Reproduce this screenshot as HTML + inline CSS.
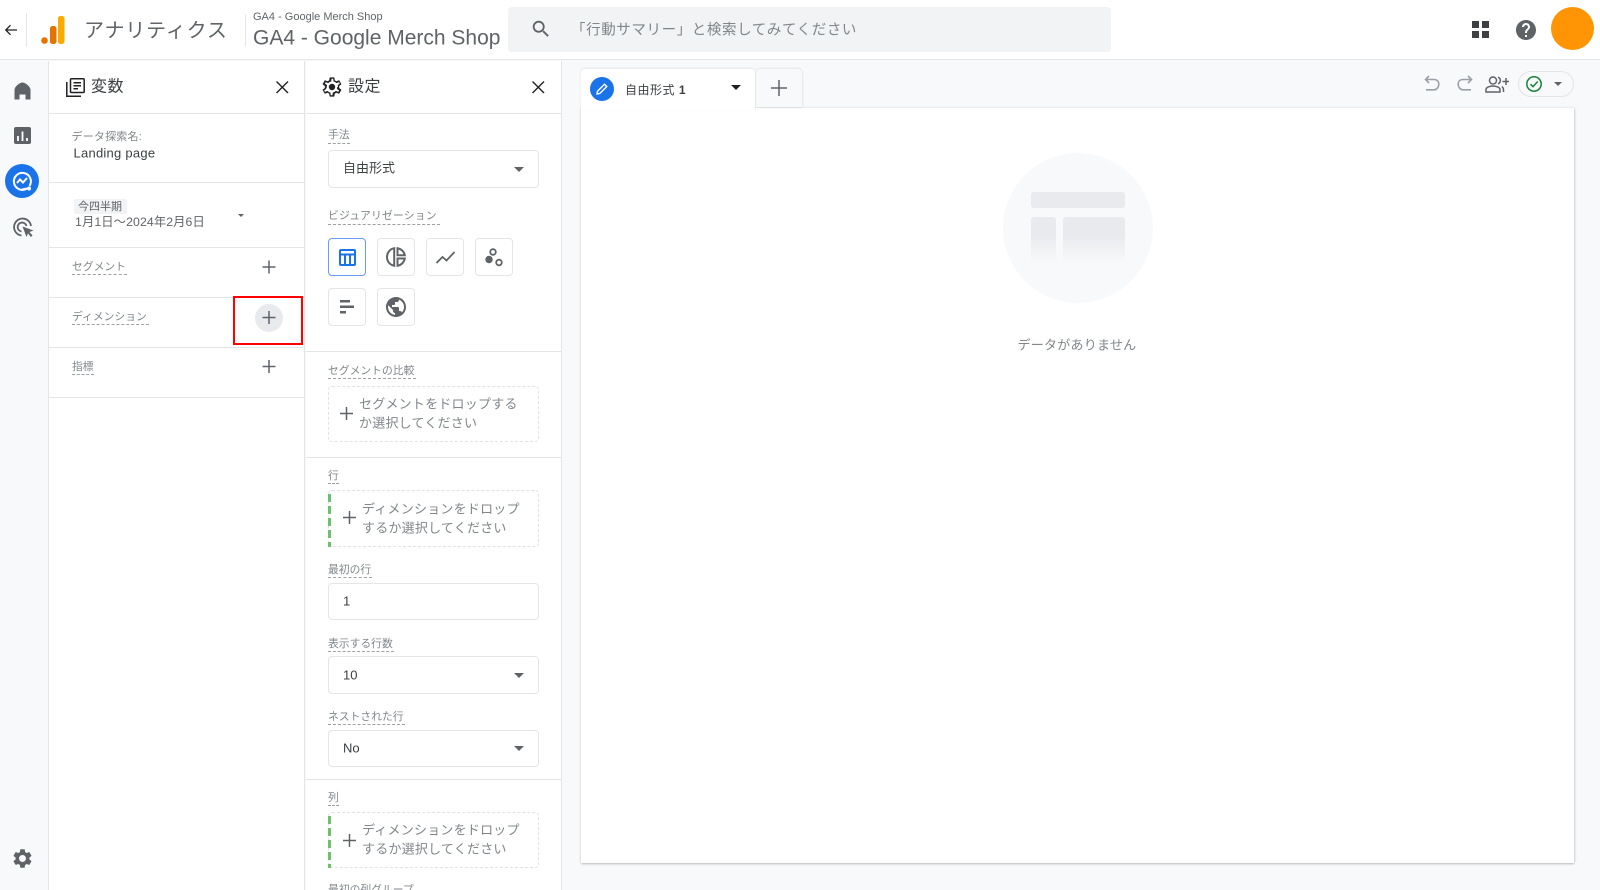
<!DOCTYPE html>
<html lang="ja"><head><meta charset="utf-8"><title>アナリティクス</title>
<style>
html,body{margin:0;padding:0;width:1600px;height:890px;overflow:hidden;background:#f8f9fa}
body{position:relative;font-family:"Liberation Sans","Noto Sans CJK JP",sans-serif;color:#3c4043;filter:blur(.35px)}
.a{position:absolute;box-sizing:border-box}
.t{position:absolute;white-space:nowrap;transform:translateY(-50%);line-height:1.3}
.l{font-size:10.800px;color:#80868b;margin-top:1px}
.u{position:absolute;height:0;border-top:1px dashed #9aa0a6}
.h{position:absolute;height:1px;background:#e3e5e8}
.v{position:absolute;width:1px;background:#e3e5e8}
.box{position:absolute;box-sizing:border-box;background:#fff;border:1px solid #e3e5e8;border-radius:4px}
.drop{position:absolute;box-sizing:border-box;border:1px dashed #e0e2e5;border-radius:4px;background:#fff}
.g{position:absolute;left:328px;width:3px;background:repeating-linear-gradient(to bottom,#6cc070 0 8px,transparent 8px 12px)}
.d{font-size:13px;color:#80868b;letter-spacing:.22px}
.arr{position:absolute;width:0;height:0;border-left:5px solid transparent;border-right:5px solid transparent;border-top:5px solid #5f6368}
svg{position:absolute;display:block;overflow:visible}
</style></head><body>

<!-- top bar -->
<div class="a" style="left:0;top:0;width:1600px;height:60px;background:#fff;border-bottom:1px solid #e3e5e8"></div>
<svg style="left:4px;top:23px" width="14" height="14" viewBox="0 0 14 14" fill="none" stroke="#202124" stroke-width="1.300"><path d="M13 7H2M6.500 2.200 1.800 7l4.700 4.800"/></svg>
<div class="v" style="left:26px;top:13px;height:34px"></div>
<svg style="left:41px;top:16px" width="24" height="28" viewBox="0 0 24 28">
<rect x="17" y="0" width="6.500" height="28" rx="2.500" fill="#f9ab00"/>
<rect x="9" y="10" width="6.500" height="18" rx="2.500" fill="#e37400"/>
<circle cx="3.500" cy="24.500" r="3.300" fill="#e37400"/></svg>
<div class="t" style="left:84px;top:31px;font-size:20px;color:#5f6368;letter-spacing:.85px">アナリティクス</div>
<div class="v" style="left:245px;top:15px;height:31px"></div>
<div class="t" style="left:253px;top:17px;font-size:11px;color:#5f6368">GA4 - Google Merch Shop</div>
<div class="t" style="left:253px;top:38px;font-size:21px;color:#5f6368">GA4 - Google Merch Shop</div>
<div class="a" style="left:508px;top:7px;width:603px;height:45px;background:#f1f3f4;border-radius:4px"></div>
<svg style="left:530px;top:18px" width="22" height="22" viewBox="0 0 24 24" fill="#5f6368"><path d="M15.500 14h-.79l-.28-.27C15.410 12.590 16 11.110 16 9.500 16 5.910 13.090 3 9.500 3S3 5.910 3 9.500 5.910 16 9.500 16c1.610 0 3.090-.59 4.230-1.570l.27.28v.79l5 4.990L20.490 19l-4.990-5zm-6 0C7.010 14 5 11.990 5 9.500S7.010 5 9.500 5 14 7.010 14 9.500 11.990 14 9.500 14z"/></svg>
<div class="t" style="left:571px;top:31px;font-size:14.500px;color:#80868b;letter-spacing:.6px">「行動サマリー」と検索してみてください</div>
<svg style="left:1472px;top:21px" width="18" height="18" fill="#3c4043"><rect width="7" height="7"/><rect x="10" width="7" height="7"/><rect y="10" width="7" height="7"/><rect x="10" y="10" width="7" height="7"/></svg>
<svg style="left:1514px;top:18px" width="24" height="24" viewBox="0 0 24 24" fill="#5f6368"><path d="M12 2C6.480 2 2 6.480 2 12s4.480 10 10 10 10-4.480 10-10S17.520 2 12 2zm1 17h-2v-2h2v2zm2.070-7.750l-.9.920C13.450 12.900 13 13.500 13 15h-2v-.5c0-1.100.45-2.100 1.170-2.830l1.240-1.260c.37-.36.59-.86.59-1.410 0-1.100-.9-2-2-2s-2 .9-2 2H8c0-2.210 1.790-4 4-4s4 1.790 4 4c0 .88-.36 1.680-.93 2.250z"/></svg>
<div class="a" style="left:1551px;top:7px;width:43px;height:43px;border-radius:50%;background:#ff9505"></div>

<!-- left rail -->
<div class="a" style="left:0;top:61px;width:49px;height:829px;background:#f8f9fa;border-right:1px solid #e3e5e8"></div>
<svg style="left:14px;top:82px" width="17" height="18" viewBox="0 0 17 18" fill="#5f6368"><path d="M8.500 0.500 C6 0.500 1 4 0.500 7.500V17.500H5.500V12.500H11.500V17.500H16.500V7.500C16 4 11 0.500 8.500 0.500z"/></svg>
<svg style="left:14px;top:127px" width="17" height="17" viewBox="0 0 17 17"><rect width="17" height="17" rx="2" fill="#5f6368"/><path d="M4 9v5M8.500 4.500V14M13 11v3" stroke="#fff" stroke-width="1.800"/></svg>
<div class="a" style="left:5px;top:164px;width:34px;height:34px;border-radius:50%;background:#1a73e8"></div>
<svg style="left:12px;top:171px" width="20" height="20" viewBox="0 0 20 20" fill="none" stroke="#fff" stroke-width="2"><path d="M17.500 15A8.500 8.500 0 1 0 15 17.500L10 18.500"/><path d="M5 12 8 8.500 11 11.500 15 7"/><circle cx="17" cy="17.500" r="1"/></svg>
<svg style="left:13px;top:217px" width="22" height="21" viewBox="0 0 22 21" fill="none" stroke="#5f6368" stroke-width="1.800"><path d="M8.500 18.500A8.500 8.500 0 1 1 18 9"/><path d="M8.500 14.500A4.500 4.500 0 1 1 13.500 9"/><path d="M9.500 9.500 20.500 13.500 16.500 15 19.500 18.500 18 20 15 16.500 13.500 20z" fill="#5f6368" stroke="none"/></svg>
<svg style="left:11px;top:847px" width="23" height="23" viewBox="0 0 24 24" fill="#5f6368"><path d="M19.140 12.940c.04-.3.060-.61.060-.94 0-.32-.02-.64-.07-.94l2.030-1.580c.18-.14.23-.41.12-.61l-1.920-3.320c-.12-.22-.37-.29-.59-.22l-2.390.96c-.5-.38-1.030-.7-1.620-.94l-.36-2.540c-.04-.24-.24-.41-.48-.41h-3.840c-.24 0-.43.17-.47.41l-.36 2.540c-.59.24-1.130.57-1.620.94l-2.390-.96c-.22-.08-.47 0-.59.22L2.740 8.870c-.12.21-.08.47.12.61l2.030 1.580c-.05.3-.09.63-.09.94s.02.64.07.94l-2.030 1.580c-.18.14-.23.41-.12.61l1.920 3.320c.12.22.37.29.59.22l2.390-.96c.5.38 1.030.7 1.620.94l.36 2.540c.05.24.24.41.48.41h3.840c.24 0 .44-.17.47-.41l.36-2.540c.59-.24 1.130-.56 1.620-.94l2.390.96c.22.08.47 0 .59-.22l1.920-3.320c.12-.22.07-.47-.12-.61l-2.010-1.580zM12 15.600c-1.980 0-3.600-1.620-3.600-3.600s1.620-3.600 3.600-3.600 3.600 1.620 3.600 3.600-1.620 3.600-3.600 3.600z"/></svg>

<!-- variables panel -->
<div class="a" style="left:49px;top:61px;width:256px;height:829px;background:#fff;border-right:1px solid #e3e5e8"></div>
<svg style="left:66px;top:78px" width="19" height="19" viewBox="0 0 19 19" fill="none" stroke="#202124" stroke-width="1.500"><rect x="4.500" y="0.800" width="13.700" height="13.700" rx="1"/><path d="M0.800 4V18.200H15M7.500 4.800H15M7.500 7.800H15M7.500 10.800H12"/></svg>
<div class="t" style="left:91px;top:88px;font-size:16px;color:#3c4043;letter-spacing:.5px">変数</div>
<svg style="left:276px;top:81px" width="12" height="12" fill="none" stroke="#202124" stroke-width="1.400"><path d="M.5.500 12 12M12 .5.500 12"/></svg>
<div class="h" style="left:49px;top:113px;width:256px"></div>
<div class="t" style="left:71.500px;top:137px;font-size:11px;color:#80868b;letter-spacing:.2px">データ探索名:</div>
<div class="t" style="left:73.500px;top:153.500px;font-size:13px;color:#3c4043;letter-spacing:.25px">Landing page</div>
<div class="h" style="left:49px;top:182px;width:256px"></div>
<div class="a" style="left:74px;top:199px;width:53px;height:15px;background:#f1f3f4;border-radius:2px"></div>
<div class="t" style="left:78px;top:206.500px;font-size:11px;color:#5f6368">今四半期</div>
<div class="t" style="left:75px;top:222.500px;font-size:12.300px;color:#5f6368;letter-spacing:.1px">1月1日～2024年2月6日</div>
<div class="arr" style="left:237.500px;top:213.500px;border-left-width:3.500px;border-right-width:3.500px;border-top-width:3.500px"></div>
<div class="h" style="left:49px;top:247px;width:256px"></div>
<div class="h" style="left:49px;top:297px;width:256px"></div>
<div class="h" style="left:49px;top:347px;width:256px"></div>
<div class="h" style="left:49px;top:397px;width:256px"></div>
<div class="t l" style="left:72px;top:266px">セグメント</div><div class="u" style="left:72px;top:274px;width:55px"></div>
<div class="t l" style="left:72px;top:316px">ディメンション</div><div class="u" style="left:72px;top:324px;width:77px"></div>
<div class="t l" style="left:72px;top:366px">指標</div><div class="u" style="left:72px;top:374px;width:22px"></div>
<div class="a" style="left:255px;top:304px;width:28px;height:28px;border-radius:50%;background:#e8eaed"></div>
<svg style="left:262px;top:260px" width="14" height="114" fill="none" stroke="#5f6368" stroke-width="1.500"><path d="M7 .5V13.500M.5 7H13.500M7 51V64M.5 57.500H13.500M7 100V113M.5 106.500H13.500"/></svg>
<div class="a" style="left:233px;top:296px;width:70px;height:49px;border:2px solid #f00"></div>

<!-- settings panel -->
<div class="a" style="left:306px;top:61px;width:256px;height:829px;background:#fff;border-right:1px solid #e3e5e8"></div>
<svg style="left:320px;top:75px" width="24" height="24" viewBox="0 0 24 24" fill="#202124"><path fill-rule="evenodd" d="M19.140 12.940c.04-.3.060-.61.060-.94 0-.32-.02-.64-.07-.94l2.030-1.580c.18-.14.23-.41.12-.61l-1.920-3.320c-.12-.22-.37-.29-.59-.22l-2.390.96c-.5-.38-1.030-.7-1.620-.94l-.36-2.540c-.04-.24-.24-.41-.48-.41h-3.840c-.24 0-.43.17-.47.41l-.36 2.540c-.59.24-1.130.57-1.620.94l-2.390-.96c-.22-.08-.47 0-.59.22L2.740 8.870c-.12.21-.08.47.12.61l2.030 1.580c-.05.3-.09.63-.09.94s.02.64.07.94l-2.030 1.580c-.18.14-.23.41-.12.61l1.920 3.320c.12.22.37.29.59.22l2.390-.96c.5.38 1.030.7 1.620.94l.36 2.540c.05.24.24.41.48.41h3.840c.24 0 .44-.17.47-.41l.36-2.540c.59-.24 1.130-.56 1.620-.94l2.390.96c.22.08.47 0 .59-.22l1.920-3.320c.12-.22.07-.47-.12-.61l-2.010-1.580zM17.200 12c0 .3-.03.6-.08.94l-.14.9 2.100 1.650-.8 1.400-2.500-1-.73.56c-.5.37-.95.63-1.420.83l-.84.34-.38 2.660h-1.600l-.38-2.660-.84-.34c-.5-.2-.95-.46-1.400-.8l-.74-.58-2.500 1-.8-1.400 2.120-1.650-.14-.9C6.830 12.600 6.800 12.300 6.800 12s.03-.6.08-.94l.14-.9-2.120-1.650.8-1.400 2.500 1 .73-.56c.5-.37.95-.63 1.420-.83l.84-.34.38-2.660h1.600l.38 2.660.84.34c.5.2.95.46 1.400.8l.74.58 2.500-1 .8 1.400-2.100 1.650.14.9c.05.34.08.64.08.95z"/><circle cx="12" cy="12" r="3.200"/></svg>
<div class="t" style="left:348px;top:87.500px;font-size:16px;color:#3c4043;letter-spacing:.5px">設定</div>
<svg style="left:532px;top:81px" width="12" height="12" fill="none" stroke="#202124" stroke-width="1.400"><path d="M.5.500 12 12M12 .5.500 12"/></svg>
<div class="h" style="left:306px;top:113px;width:256px"></div>

<div class="t l" style="left:328px;top:134px">手法</div><div class="u" style="left:328px;top:143px;width:22px"></div>
<div class="box" style="left:328px;top:150px;width:211px;height:38px"></div>
<div class="t" style="left:343px;top:169px;font-size:13px;color:#3c4043">自由形式</div>
<div class="arr" style="left:514px;top:167px"></div>

<div class="t l" style="left:328px;top:215px;letter-spacing:.2px">ビジュアリゼーション</div><div class="u" style="left:328px;top:224px;width:112px"></div>

<div class="box" style="left:328px;top:238px;width:38px;height:38px;border-color:#669df6"></div>
<svg style="left:339px;top:249px" width="17" height="17" fill="none" stroke="#1a73e8" stroke-width="2"><rect x="1" y="1" width="15" height="15" rx="1"/><path d="M1 5.500H16M6 5.500V16M11 5.500V16"/></svg>
<div class="box" style="left:377px;top:238px;width:38px;height:38px"></div>
<svg style="left:386px;top:247px" width="20" height="20" viewBox="0 0 20 20" fill="none" stroke="#5f6368" stroke-width="2"><path d="M8.200 1.200C4 2 1 5.500 1 10s3 8 7.200 8.800z"/><path d="M11.500 1.200V8.200H18.800C18.200 4.700 15 1.700 11.500 1.200z"/><path d="M11.500 11.500V18.800C15 18.300 18.200 15.300 18.800 11.500z"/></svg>
<div class="box" style="left:426px;top:238px;width:38px;height:38px"></div>
<svg style="left:436px;top:251px" width="19" height="13" fill="none" stroke="#5f6368" stroke-width="1.800"><path d="M.5 12 6.500 6l4 3.500L18.500 1"/></svg>
<div class="box" style="left:475px;top:238px;width:38px;height:38px"></div>
<svg style="left:485px;top:248px" width="19" height="19"><circle cx="8" cy="4" r="2.800" fill="none" stroke="#5f6368" stroke-width="1.800"/><circle cx="4" cy="11.500" r="3.700" fill="#5f6368"/><circle cx="14" cy="14.500" r="2.800" fill="none" stroke="#5f6368" stroke-width="1.800"/></svg>
<div class="box" style="left:328px;top:288px;width:38px;height:38px"></div>
<svg style="left:340px;top:300px" width="15" height="14" fill="#5f6368"><rect width="10" height="2.500"/><rect y="5.500" width="14" height="2.500"/><rect y="11" width="6" height="2.500"/></svg>
<div class="box" style="left:377px;top:288px;width:38px;height:38px"></div>
<svg style="left:384px;top:295px" width="24" height="24" viewBox="0 0 24 24" fill="#5f6368"><path d="M12 2C6.480 2 2 6.480 2 12s4.480 10 10 10 10-4.480 10-10S17.520 2 12 2zm-1 17.930c-3.950-.49-7-3.850-7-7.930 0-.62.080-1.210.21-1.790L9 15v1c0 1.100.9 2 2 2v1.930zm6.900-2.540c-.26-.81-1-1.390-1.900-1.390h-1v-3c0-.55-.45-1-1-1H8v-2h2c.55 0 1-.45 1-1V7h2c1.100 0 2-.9 2-2v-.41c2.930 1.190 5 4.060 5 7.410 0 2.080-.8 3.970-2.100 5.390z"/></svg>

<div class="h" style="left:306px;top:351px;width:256px"></div>
<div class="t l" style="left:328px;top:370px">セグメントの比較</div><div class="u" style="left:328px;top:378px;width:88px"></div>
<div class="drop" style="left:328px;top:386px;width:211px;height:56px"></div>
<svg style="left:339.500px;top:406.500px" width="13" height="13" fill="none" stroke="#5f6368" stroke-width="1.500"><path d="M6.500 0V13M0 6.500H13"/></svg>
<div class="t d" style="left:359px;top:405px">セグメントをドロップする</div>
<div class="t d" style="left:359px;top:424px">か選択してください</div>
<div class="h" style="left:306px;top:457px;width:256px"></div>

<div class="t l" style="left:328px;top:475px">行</div><div class="u" style="left:328px;top:483px;width:11px"></div>
<div class="drop" style="left:328px;top:490px;width:211px;height:57px"></div>
<div class="g" style="top:494px;height:53px"></div>
<svg style="left:342.500px;top:511px" width="13" height="13" fill="none" stroke="#5f6368" stroke-width="1.500"><path d="M6.500 0V13M0 6.500H13"/></svg>
<div class="t d" style="left:362px;top:509.500px">ディメンションをドロップ</div>
<div class="t d" style="left:362px;top:528.500px">するか選択してください</div>

<div class="t l" style="left:328px;top:569px">最初の行</div><div class="u" style="left:328px;top:577px;width:44px"></div>
<div class="box" style="left:328px;top:583px;width:211px;height:37px"></div>
<div class="t" style="left:343px;top:602px;font-size:13px;color:#3c4043">1</div>

<div class="t l" style="left:328px;top:643px">表示する行数</div><div class="u" style="left:328px;top:651px;width:66px"></div>
<div class="box" style="left:328px;top:656px;width:211px;height:38px"></div>
<div class="t" style="left:343px;top:675.500px;font-size:13px;color:#3c4043">10</div>
<div class="arr" style="left:514px;top:673px"></div>

<div class="t l" style="left:328px;top:716px">ネストされた行</div><div class="u" style="left:328px;top:724px;width:77px"></div>
<div class="box" style="left:328px;top:730px;width:211px;height:37px"></div>
<div class="t" style="left:343px;top:749px;font-size:13px;color:#3c4043">No</div>
<div class="arr" style="left:514px;top:746px"></div>
<div class="h" style="left:306px;top:779px;width:256px"></div>

<div class="t l" style="left:328px;top:797px">列</div><div class="u" style="left:328px;top:805px;width:11px"></div>
<div class="drop" style="left:328px;top:812px;width:211px;height:56px"></div>
<div class="g" style="top:816px;height:52px"></div>
<svg style="left:342.500px;top:833.500px" width="13" height="13" fill="none" stroke="#5f6368" stroke-width="1.500"><path d="M6.500 0V13M0 6.500H13"/></svg>
<div class="t d" style="left:362px;top:831px">ディメンションをドロップ</div>
<div class="t d" style="left:362px;top:850px">するか選択してください</div>
<div class="t l" style="left:328px;top:889px">最初の列グループ</div>

<!-- main -->
<div class="a" style="left:581px;top:108px;width:993px;height:755px;background:#fff;box-shadow:0 1px 2px rgba(60,64,67,.3),1px 0 2px rgba(60,64,67,.1)"></div>
<div class="a" style="left:756px;top:69px;width:46px;height:38px;background:#f8f9fa;border-radius:4px 4px 0 0;box-shadow:0 0 2px rgba(60,64,67,.22)"></div>
<svg style="left:771px;top:80px" width="16" height="16" fill="none" stroke="#5f6368" stroke-width="1.500"><path d="M8 0V16M0 8H16"/></svg>
<div class="a" style="left:581px;top:69px;width:174px;height:42px;background:#fff;border-radius:4px 4px 0 0;box-shadow:0 -1px 2px rgba(60,64,67,.1)"></div>
<div class="a" style="left:590px;top:77px;width:24px;height:24px;border-radius:50%;background:#1a73e8"></div>
<svg style="left:596px;top:83px" width="12" height="12" fill="none" stroke="#fff" stroke-width="1.400"><path d="M1 11 1.500 8.200 8.500 1.200 10.800 3.500 3.800 10.500z"/></svg>
<div class="t" style="left:625px;top:90.500px;font-size:12px;color:#3c4043;letter-spacing:.5px">自由形式 <b>1</b></div>
<div class="arr" style="left:731px;top:85px;border-top-color:#202124"></div>

<svg style="left:1424px;top:75px" width="16" height="17" fill="none" stroke="#9aa0a6" stroke-width="1.600"><path d="M5 1 1.500 4.500 5 8M1.500 4.500H10C13 4.500 14.800 6.500 14.800 9.200S13 14.800 10 14.800H2"/></svg>
<svg style="left:1457px;top:75px" width="16" height="17" fill="none" stroke="#9aa0a6" stroke-width="1.600"><path d="M11 1 14.500 4.500 11 8M14.500 4.500H6C3 4.500 1.200 6.500 1.200 9.200S3 14.800 6 14.800H14"/></svg>
<svg style="left:1485px;top:76px" width="24" height="17" fill="none" stroke="#5f6368" stroke-width="1.500"><circle cx="8" cy="4.500" r="3.500"/><path d="M1 16V13.500C1 11.500 4.500 10 8 10S15 11.500 15 13.500V16zM13 1.200A3.500 3.500 0 0 1 13 7.800M17 10.500C18 11.500 18.500 12.500 18.500 14V16M21 2V9M17.500 5.500H24"/></svg>
<div class="a" style="left:1518px;top:71px;width:56px;height:26px;border:1px solid #e3e5e8;border-radius:13px"></div>
<svg style="left:1526px;top:76px" width="16" height="16" fill="none" stroke="#188038" stroke-width="1.500"><circle cx="8" cy="8" r="7.200"/><path d="M4.500 8.200 7 10.700 11.700 5.500"/></svg>
<div class="arr" style="left:1554px;top:82px;border-left-width:4.500px;border-right-width:4.500px;border-top-width:4.500px"></div>

<div class="a" style="left:1003px;top:153px;width:150px;height:150px;border-radius:50%;background:#f8f9fa"></div>
<div class="a" style="left:1031px;top:192px;width:94px;height:16px;border-radius:3px;background:#e8eaed"></div>
<div class="a" style="left:1031px;top:217px;width:25px;height:46px;border-radius:3px 3px 0 0;background:linear-gradient(#e8eaed 40%,#f8f9fa)"></div>
<div class="a" style="left:1063px;top:217px;width:62px;height:46px;border-radius:3px 3px 0 0;background:linear-gradient(#e8eaed 40%,#f8f9fa)"></div>
<div class="t" style="left:1017.500px;top:346px;font-size:13px;color:#80868b;letter-spacing:.25px">データがありません</div>
</body></html>
